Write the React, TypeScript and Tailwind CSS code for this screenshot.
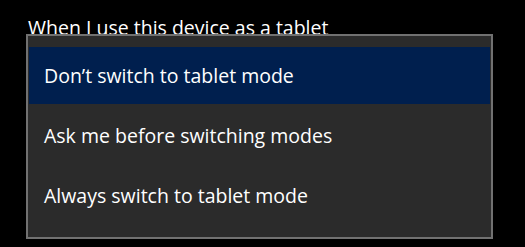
import React from "react";

const font = { fontFamily: '"Open Sans", "Noto Sans", sans-serif' };

export default function App() {
  return (
    <div className="relative w-[525px] h-[247px] bg-black overflow-hidden text-white" style={font}>
      <div className="pl-[28px] pt-[16px] text-[19.5px] leading-[24px] text-white">
        When I use this device as a tablet
      </div>
      <div className="absolute left-[26px] top-[34px] w-[467px] h-[205px] border-2 border-[#717171] bg-[#2b2b2b] px-px pt-[11px]">
        <div className="h-[57px] bg-[#001f4e] flex items-center pl-[15px] text-[19.5px]">
          Don’t switch to tablet mode
        </div>
        <div className="h-[60px] flex items-center pl-[15px] pt-[4px] text-[19.5px]">
          Ask me before switching modes
        </div>
        <div className="h-[60px] flex items-center pl-[15px] pt-[4px] text-[19.5px]">
          Always switch to tablet mode
        </div>
      </div>
    </div>
  );
}
